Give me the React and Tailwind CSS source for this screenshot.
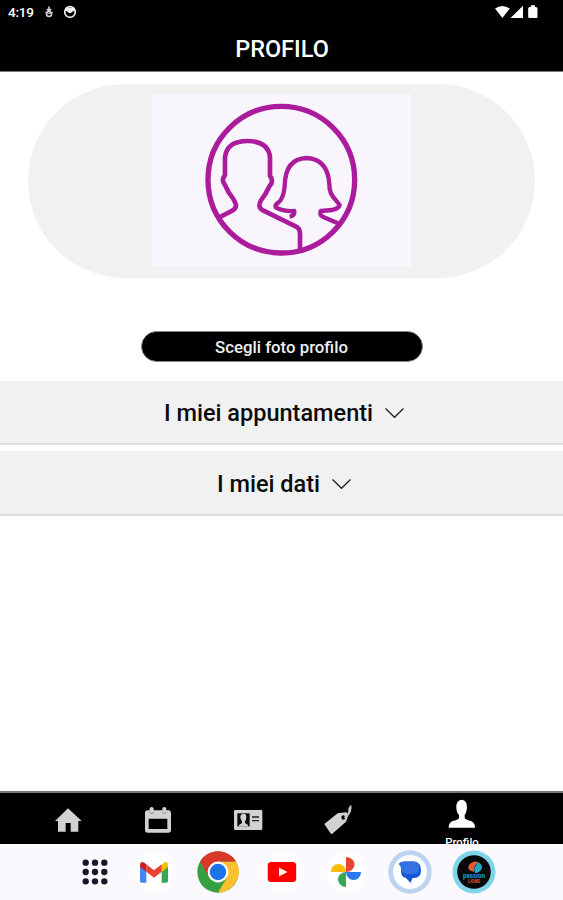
import React from 'react';

const StatusBar = () => (
    <div className="flex h-6 items-center justify-between pl-2 pr-[24px] text-white">
        <div className="flex items-center">
            <span className="w-[27px] text-[13.5px] font-medium leading-6 tracking-[-0.2px]">4:19</span>
            <svg className="ml-[9px] h-3 w-[10px]" viewBox="0 0 10 12" fill="none" stroke="#d4d4d4" strokeWidth="1.6">
                <path d="M5 .5V5M2.8 3.2 5 5l2.2-1.8" />
                <circle cx="5" cy="8" r="2.5" />
                <path d="M1.2 6.2l3.8 1.2 3.8-1.2" strokeWidth="1" />
            </svg>
            <svg className="ml-[9px] h-[14px] w-[14px]" viewBox="0 0 14 14">
                <circle cx="7" cy="7" r="5.3" fill="none" stroke="#f0f0f0" strokeWidth="1.7" />
                <path d="M2.2 2.8h9.6v3.2L9.5 6.4 8 8H6L4.5 6.4 2.2 6z" fill="#f0f0f0" />
            </svg>
        </div>
        <svg className="h-[14px] w-[44px]" viewBox="0 0 44 14" fill="#fff">
            <path d="M0 3.6Q7.3-1.8 14.8 3.6L7.4 13z" />
            <path d="M15.5 13 28 .8V13z" />
            <path d="M33.2 3.5q0-1.5 1.5-1.5h1.2V.3h4V2h1q1.6 0 1.6 1.5v8.3q0 1.2-1.2 1.2h-6.9q-1.2 0-1.2-1.2z" />
        </svg>
    </div>
);

const Avatar = () => (
    <svg className="h-[173px] w-[259px] bg-[#f8f6fc]" viewBox="-114 12 777 519" fill="none" stroke="#aa1c9b" strokeWidth="14" strokeLinejoin="round">
        <circle cx="274" cy="269" r="220" strokeWidth="16" />
        <path d="M90 381 127 362Q142 354 136 339Q132 328 116 307L105 285Q95 273 101 262L105 255V202Q110 153 173 153Q236 154 240 202V258Q249 267 244 281L237 291Q228 312 213 331Q201 352 219 361L317 409Q330 415 330 430V482" />
        <path d="M299 380Q315 377 313 363Q280 365 257 352Q253 346 265 338Q281 325 284 289Q285 206 350 204Q413 207 418 282Q417 310 437 330L449 345Q447 355 427 360L392 363Q388 376 400 381L449 402" strokeWidth="13" />
    </svg>
);

const Section = ({ title, className }) => (
    <button type="button" className={`flex w-full items-center justify-center border-b-2 border-[#dedede] bg-[#f1f1f1] pl-[5px] ${className}`}>
        <span className="text-[23.5px] font-medium leading-7 text-[#0c0c0c]">{title}</span>
        <svg className="ml-[12px] h-[12px] w-[19px]" viewBox="0 0 19 12" fill="none" stroke="#222" strokeWidth="1.3">
            <path d="m.5 1.5 9 8.8 9-8.8" />
        </svg>
    </button>
);

const NavBar = () => (
    <nav className="flex h-[53px] shrink-0 overflow-hidden border-t-2 border-[#777] bg-black pl-[23px] text-white">
        <div className="flex w-[90px] justify-center pt-[12px]">
            <svg className="h-[30px] w-[30px]" viewBox="69 60 90 90" fill="#d2d2d2">
                <path d="M114 70 155 108H145V140H122V114H107V140H84V108H75z" />
            </svg>
        </div>
        <div className="flex w-[90px] justify-center pt-[12px]">
            <svg className="h-[30px] w-[30px]" viewBox="339 60 90 90" fill="#d2d2d2">
                <path fillRule="evenodd" d="M352 76H359V70Q365 62 371 70V76H397V70Q403 62 409 70V76H415Q423 76 423 84V135Q423 143 415 143H353Q345 143 345 135V84Q345 76 352 76zM356 101V132H412V101z" />
                <path d="M359 82q6 7 12 0M397 82q6 7 12 0" fill="none" stroke="#666" strokeWidth="2" />
            </svg>
        </div>
        <div className="flex w-[90px] justify-center pt-[12px]">
            <svg className="h-[30px] w-[30px]" viewBox="129 60 90 90">
                <rect x="132" y="75" width="85" height="60" rx="4" fill="#d2d2d2" />
                <path d="M142 85H179V124H142z" fill="#0a0a0a" />
                <path d="M160 86Q170 86 169 98Q168 106 165 109V114L174 120V124H147V120L156 114V109Q151 104 151 96Q151 87 160 86z" fill="#d2d2d2" />
                <path d="M186 96H207M186 107H207" stroke="#222" strokeWidth="4" />
            </svg>
        </div>
        <div className="flex w-[90px] justify-center pt-[12px]">
            <svg className="h-[30px] w-[30px]" viewBox="399 60 90 90">
                <path fillRule="evenodd" d="M403 117 443 85 468 82Q474 84 475 91L468 110 427 146Q424 148 421 144zM455 94a6 6 0 1 0 10 7a6 6 0 1 0-10-7" fill="#d2d2d2" />
                <path d="M463 98Q477 90 477 79Q476 70 482 64Q484 79 474 90" fill="none" stroke="#c8c8c8" strokeWidth="4.5" />
            </svg>
        </div>
        <div className="flex w-[158px] flex-col items-center pt-[6px]">
            <svg className="h-[30px] w-[30px] shrink-0" viewBox="231 42 90 90" fill="#fff">
                <path d="M275 44Q292 45 291 68Q289 84 284 90V99Q288 105 303 108Q315 113 315 128H236Q236 113 248 108Q264 105 267 99V90Q260 84 259 69Q258 45 275 44z" />
            </svg>
            <span className="mt-[7px] shrink-0 text-[11.3px] font-medium leading-[14px]">Profilo</span>
        </div>
    </nav>
);

const Dock = () => (
    <div className="flex h-14 shrink-0 items-center border-t border-white bg-[#fbf8fe] pb-[2px] pl-[82px]">
        <svg className="h-[26px] w-[26px]" viewBox="156 222 78 78" fill="#17172b">
            {[233, 261, 289].map((y) => [167, 195, 223].map((x) => (
                <circle key={`${x}-${y}`} cx={x} cy={y} r="9.5" />
            )))}
        </svg>
        <svg className="ml-[24px] h-[44px] w-[44px]" viewBox="306 195 132 132">
            <circle cx="372" cy="261" r="59" fill="#fff" />
            <path d="M330 242 349 256V293H335Q330 293 330 288z" fill="#4285f4" />
            <path d="M395 256 414 242V288Q414 293 409 293H395z" fill="#34a853" />
            <path d="M395 240 402 233Q414 227 414 242V246L395 261z" fill="#fbbc04" />
            <path d="M349 238 372 256 395 238V260L372 278 349 260z" fill="#ea4335" />
            <path d="M330 246V240Q331 227 343 233L349 238V260z" fill="#c5221f" />
        </svg>
        <svg className="ml-[20px] h-[44px] w-[44px]" viewBox="-22 -22 44 44">
            <circle r="20.7" fill="#34a042" />
            <path d="M0-10.4H17.9A20.7 20.7 0 0 1 0 20.7L9 5.2z" fill="#fbc02d" />
            <path d="M-9 5.2-17.9-10.4A20.7 20.7 0 0 1 17.9-10.4H0z" fill="#da3829" />
            <circle r="10.4" fill="#fff" />
            <circle r="8.2" fill="#1a73e8" />
        </svg>
        <svg className="ml-[20px] h-[44px] w-[44px]" viewBox="-22 -22 44 44">
            <circle r="19.7" fill="#fff" />
            <rect x="-14.3" y="-10" width="28.5" height="20" rx="3.5" fill="#f00" />
            <path d="M-3-4.5 5.5 0-3 4.5z" fill="#fff" />
        </svg>
        <svg className="ml-[20px] h-[44px] w-[44px]" viewBox="-22 -22 44 44">
            <circle r="19.7" fill="#fff" />
            <path d="M0 0V-15A8.5 7.5 0 0 1 0 0" fill="#ea4335" />
            <path d="M0 0H15A7.5 8 0 0 1 0 0" fill="#2878ee" />
            <path d="M0 0V15A8 7.5 0 0 1 0 0" fill="#34a853" />
            <path d="M0 0H-15A7.5 8 0 0 1 0 0" fill="#fbbc04" />
        </svg>
        <svg className="ml-[20px] h-[44px] w-[44px]" viewBox="-22 -22 44 44">
            <circle r="19.3" fill="#fff" stroke="#bdd3f2" strokeWidth="4.8" />
            <path d="M-11-8Q-10-10.5-5-10.5H4Q11-10 11-2Q11 6 4 6H2.5L.5 11-4 6Q-9 5-9-1V-4Q-9-6-11-8z" fill="#1259d3" />
            <path d="M-11-8Q-10-10.5-5-10.5H4Q9-10 9-4Q9 2 3 2H-3Q-9 1-9-4Q-9-6-11-8z" fill="#3471e2" />
        </svg>
        <svg className="ml-[20px] h-[44px] w-[44px]" viewBox="-22 -22 44 44">
            <circle r="21.5" fill="#80d4ea" />
            <circle r="16.8" fill="#080808" />
            <path d="M0 0Q-8-2-5-7Q-1-12 4-10L1-6Q-1-3 0 0z" fill="#e45a32" />
            <path d="M4-10Q10-7 7-2Q5 1 1 1L0-3z" fill="#25a5c8" />
            <text y="6" textAnchor="middle" textLength="22" lengthAdjust="spacingAndGlyphs" fontSize="7.5" fontWeight="900" fill="#168fc0">passion</text>
            <text y="11.2" textAnchor="middle" textLength="12" lengthAdjust="spacingAndGlyphs" fontSize="5" fontWeight="900" fill="#d64d2b">LIONS</text>
        </svg>
    </div>
);

const App = () => {
    return (
        <div className="flex h-[900px] w-[563px] flex-col overflow-hidden bg-white font-['Roboto',sans-serif]">
            <header className="h-[72px] shrink-0 border-b border-[#777] bg-black">
                <StatusBar />
                <h1 className="pl-px text-center text-[23.5px] font-medium leading-[50px] text-white">PROFILO</h1>
            </header>
            <main className="flex flex-1 flex-col items-center">
                <div className="mt-3 flex h-[194px] w-[507px] items-start justify-center rounded-full bg-[#f1f1f1] pt-[10px]">
                    <Avatar />
                </div>
                <button type="button" className="mt-[53px] h-[31px] w-[282px] rounded-full border border-[#888] bg-black text-[16.8px] font-medium leading-[30px] text-[#eee]">
                    Scegli foto profilo
                </button>
                <Section title="I miei appuntamenti" className="mt-[19px] h-[64px] pt-px" />
                <Section title="I miei dati" className="mt-[6px] h-[65px] pt-[2px]" />
            </main>
            <NavBar />
            <Dock />
        </div>
    );
};

export default App;
